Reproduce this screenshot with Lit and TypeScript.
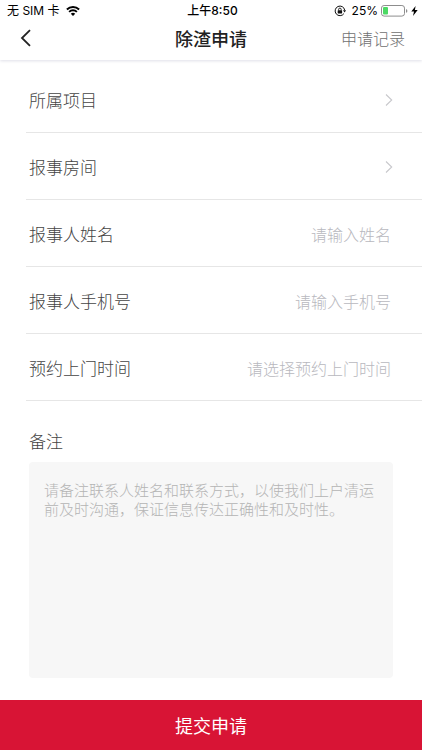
import { LitElement, html, css, svg } from "lit";
import { customElement, state } from "lit/decorators.js";

interface TextField {
  id: string;
  label: string;
  hint: string;
  type: string;
  readonly?: boolean;
}

const pickers = ["所属项目", "报事房间"];

const fields: TextField[] = [
  { id: "name", label: "报事人姓名", hint: "请输入姓名", type: "text" },
  { id: "phone", label: "报事人手机号", hint: "请输入手机号", type: "tel" },
  { id: "time", label: "预约上门时间", hint: "请选择预约上门时间", type: "text", readonly: true },
];

const wifi = svg`<svg width="14" height="10" viewBox="0 0 14 10" aria-hidden="true">
  <path d="M0.9 3.5A8.8 8.8 0 0 1 13.1 3.5" fill="none" stroke="#000" stroke-width="2" />
  <path d="M3.1 5.9A5.6 5.6 0 0 1 10.9 5.9" fill="none" stroke="#000" stroke-width="1.9" />
  <path d="M7 10L4.8 7.8A3.2 3.2 0 0 1 9.2 7.8Z" />
</svg>`;

const rotationLock = svg`<svg width="12" height="12" viewBox="0 0 12 12" aria-hidden="true">
  <path d="M9.9 8.6A4.8 4.8 0 1 1 10.7 5.2" fill="none" stroke="#111" stroke-width="1" />
  <path d="M9 5.2H12L10.6 7.4Z" fill="#111" />
  <rect x="3.7" y="5.3" width="4.4" height="3.2" rx="0.4" fill="#111" />
  <path d="M4.6 5.4V4.4A1.3 1.3 0 0 1 7.2 4.4V5.4" fill="none" stroke="#111" stroke-width="0.9" />
</svg>`;

const battery = svg`<svg width="27" height="12" viewBox="0 0 27 12" aria-hidden="true">
  <rect x="0.5" y="0.5" width="23" height="10.6" rx="2.6" fill="#fff" stroke="#8d8d8d" />
  <rect x="2" y="2" width="5" height="7.6" rx="1" fill="#4cd964" />
  <path d="M25 4V7.8Q26.4 7.2 26.4 5.9T25 4Z" fill="#8d8d8d" />
</svg>`;

const bolt = svg`<svg width="7" height="10" viewBox="0 0 7 10" aria-hidden="true">
  <path d="M4.6 0L0.3 5.5H3L2 10L6.7 4H3.9Z" />
</svg>`;

const back = svg`<svg width="12" height="18" viewBox="0 0 12 18" aria-hidden="true">
  <path d="M10 1.2L2 9L10 16.8" fill="none" stroke="#222" stroke-width="1.8" />
</svg>`;

const chevron = svg`<svg width="8" height="12" viewBox="0 0 8 12" aria-hidden="true">
  <path d="M1 0.5L6.7 6L1 11.5" fill="none" stroke="#c8c8cc" stroke-width="1.1" />
</svg>`;

@customElement("app-root")
export class AppRoot extends LitElement {
  @state() private remark = "";

  static styles = css`
    :host {
      display: flex;
      flex-direction: column;
      min-height: 100vh;
      background: #fff;
      color: #444;
      font-family: "Noto Sans CJK SC", sans-serif;
      font-weight: 300;
    }
    * {
      box-sizing: border-box;
    }
    svg {
      display: block;
      flex: none;
    }
    button,
    input,
    textarea {
      margin: 0;
      padding: 0;
      border: 0;
      border-radius: 0;
      background: none;
      color: inherit;
      font: inherit;
      outline-color: #d81435;
    }
    .top {
      box-shadow: 0 1px 3px #dfdfe8;
    }
    .status,
    .nav {
      display: grid;
      grid-template-columns: 1fr auto 1fr;
      align-items: center;
    }
    .status {
      height: 20px;
      padding: 2px 4px 0 7px;
      color: #000;
      font-family: Inter, "Noto Sans CJK SC", sans-serif;
      font-size: 12px;
      font-weight: 400;
      line-height: 18px;
    }
    .group {
      display: flex;
      align-items: center;
      gap: 6px;
    }
    .power {
      justify-content: flex-end;
      gap: 3px;
    }
    .level {
      margin-left: 3px;
    }
    .clock {
      font-weight: 500;
    }
    .nav {
      height: 40px;
      padding: 0 17px 4px;
    }
    .back {
      justify-self: start;
      padding: 4px 4px 4px 3px;
    }
    .title {
      margin: 0;
      color: #222;
      font-size: 18px;
      font-weight: 500;
      line-height: 26px;
    }
    .history {
      justify-self: end;
      color: #707070;
      font-size: 16px;
      line-height: 26px;
      text-decoration: none;
    }
    .form {
      flex: 1;
      display: flex;
      flex-direction: column;
      padding-top: 6px;
    }
    .row {
      display: flex;
      align-items: center;
      justify-content: space-between;
      gap: 16px;
      height: 67px;
      margin-left: 26px;
      padding: 1px 29px 0 3px;
      border-bottom: 1px solid #e6e6e6;
      font-size: 17px;
      text-align: left;
    }
    .label {
      flex: none;
      line-height: 26px;
    }
    .input {
      flex: 1;
      min-width: 0;
      height: 40px;
      padding-right: 2px;
      font-size: 16px;
      text-align: right;
    }
    .input::placeholder {
      color: #b8b8be;
      opacity: 1;
    }
    .remark {
      flex: 1;
      display: flex;
      flex-direction: column;
      gap: 8px;
      padding: 27px 29px 22px;
      font-size: 17px;
    }
    .area {
      flex: 1;
      width: 100%;
      min-height: 120px;
      padding: 18px 6px 18px 15px;
      border-radius: 4px;
      background: #f7f7f7;
      font-size: 15px;
      line-height: 19px;
      resize: none;
    }
    .area::placeholder {
      color: #b4b4b4;
      opacity: 1;
    }
    .submit {
      height: 50px;
      background: #d81435;
      color: #fff;
      font-size: 18px;
      font-weight: 400;
    }
  `;

  render() {
    return html`
      <header class="top">
        <div class="status">
          <div class="group"><span>无 SIM 卡</span>${wifi}</div>
          <span class="clock">上午8:50</span>
          <div class="group power">
            ${rotationLock}<span class="level">25%</span>${battery}${bolt}
          </div>
        </div>
        <nav class="nav">
          <button class="back" type="button" aria-label="返回">${back}</button>
          <h1 class="title">除渣申请</h1>
          <a class="history" href="#history">申请记录</a>
        </nav>
      </header>
      <form class="form" @submit=${(e: Event) => e.preventDefault()}>
        ${pickers.map(
          (label) => html`<button class="row" type="button">
            <span class="label">${label}</span>${chevron}
          </button>`
        )}
        ${fields.map(
          (f) => html`<div class="row">
            <label class="label" for=${f.id}>${f.label}</label>
            <input
              class="input"
              id=${f.id}
              type=${f.type}
              placeholder=${f.hint}
              ?readonly=${f.readonly}
            />
          </div>`
        )}
        <div class="remark">
          <label class="label" for="remark">备注</label>
          <textarea
            class="area"
            id="remark"
            placeholder="请备注联系人姓名和联系方式，以使我们上户清运前及时沟通，保证信息传达正确性和及时性。"
            .value=${this.remark}
            @input=${(e: Event) => (this.remark = (e.target as HTMLTextAreaElement).value)}
          ></textarea>
        </div>
        <button class="submit" type="submit">提交申请</button>
      </form>
    `;
  }
}
